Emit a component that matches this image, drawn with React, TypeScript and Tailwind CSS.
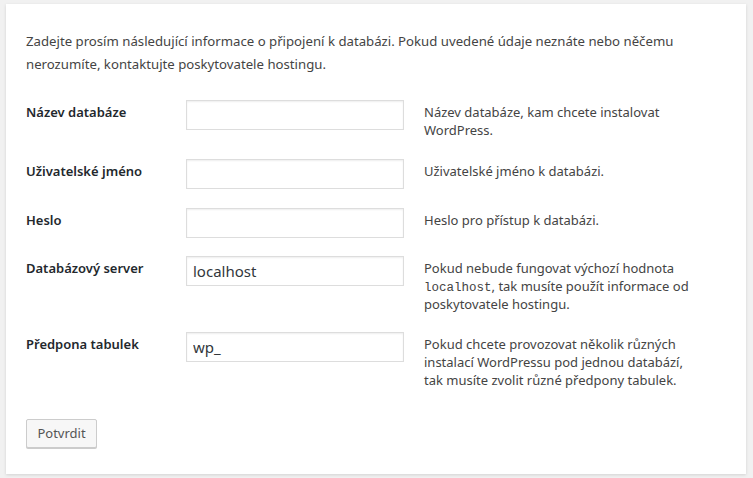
import React from 'react';

type Row = {
  label: string;
  value?: string;
  help: React.ReactNode;
  gap: string;
};

const rows: Row[] = [
  { label: 'Název databáze', help: 'Název databáze, kam chcete instalovat WordPress.', gap: 'mb-[20px]' },
  { label: 'Uživatelské jméno', help: 'Uživatelské jméno k databázi.', gap: 'mb-[19px]' },
  { label: 'Heslo', help: 'Heslo pro přístup k databázi.', gap: 'mb-[18px]' },
  {
    label: 'Databázový server',
    value: 'localhost',
    help: (
      <>
        Pokud nebude fungovat výchozí hodnota{' '}
        <code className="font-['Liberation_Mono',monospace] text-[12.5px] leading-none">localhost</code>, tak musíte
        použít informace od poskytovatele hostingu.
      </>
    ),
    gap: 'mb-[19px]',
  },
  {
    label: 'Předpona tabulek',
    value: 'wp_',
    help: 'Pokud chcete provozovat několik různých instalací WordPressu pod jednou databází, tak musíte zvolit různé předpony tabulek.',
    gap: 'mb-0',
  },
];

export default function App() {
  return (
    <div className="w-[753px] h-[478px] bg-[#f1f1f1] pt-[4px] pl-[6px] font-['Noto_Sans',sans-serif] text-[#444]">
      {/* ── Setup card ── */}
      <div className="w-[740px] h-[470px] bg-white shadow-[0_1px_3px_rgba(0,0,0,0.13)] pt-[26px] pl-[20px] pr-[20px]">
        <p className="text-[13.2px] leading-[23px] w-[680px]">
          Zadejte prosím následující informace o připojení k databázi. Pokud uvedené údaje neznáte nebo něčemu
          nerozumíte, kontaktujte poskytovatele hostingu.
        </p>

        <div className="mt-[24px] flex flex-col">
          {rows.map((row) => (
            <div key={row.label} className={`flex items-start ${row.gap}`}>
              <div className="w-[160px] pt-[3px] text-[13px] leading-[18px] font-semibold text-[#23282d]">
                {row.label}
              </div>
              <input
                type="text"
                defaultValue={row.value ?? ''}
                className="w-[218px] h-[30px] border border-[#ddd] shadow-[inset_0_1px_2px_rgba(0,0,0,0.07)] px-[6px] text-[15px] text-[#32373c] outline-none bg-white"
              />
              <div className="w-[268px] ml-[20px] pt-[3px] text-[13px] leading-[18px] text-[#444]">{row.help}</div>
            </div>
          ))}
        </div>

        <button
          type="button"
          className="mt-[30px] h-[29px] px-[10px] w-[71px] border border-[#ccc] bg-[#f7f7f7] shadow-[0_1px_0_#ccc] rounded-[2px] text-[13px] text-[#555]"
        >
          Potvrdit
        </button>
      </div>
    </div>
  );
}
